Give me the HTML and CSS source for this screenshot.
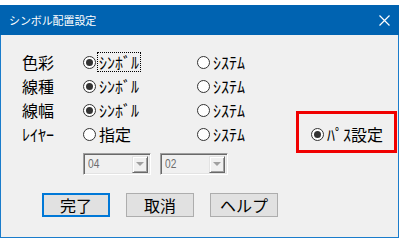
FILE: index.html
```html
<!DOCTYPE html>
<html lang="ja">
<head>
<meta charset="utf-8">
<link rel="stylesheet" href="styles.css">
</head>
<body>
<div class="window">
  <div class="titlebar">
    <span class="title">シンボル配置設定</span>
    <svg class="close" width="11" height="11" viewBox="0 0 11 11"><path d="M0.5 0.5 L10.5 10.5 M10.5 0.5 L0.5 10.5" stroke="#fff" stroke-width="1.2" fill="none"/></svg>
  </div>
  <div class="content">
    <div class="grid">
      <div class="label">色彩</div>
      <div class="radio"><span class="dot checked"></span><span class="text focus">ｼﾝﾎﾞﾙ</span></div>
      <div class="radio"><span class="dot"></span><span class="text">ｼｽﾃﾑ</span></div>
      <div></div>

      <div class="label">線種</div>
      <div class="radio"><span class="dot checked"></span><span class="text">ｼﾝﾎﾞﾙ</span></div>
      <div class="radio"><span class="dot"></span><span class="text">ｼｽﾃﾑ</span></div>
      <div></div>

      <div class="label">線幅</div>
      <div class="radio"><span class="dot checked"></span><span class="text">ｼﾝﾎﾞﾙ</span></div>
      <div class="radio"><span class="dot"></span><span class="text">ｼｽﾃﾑ</span></div>
      <div></div>

      <div class="label">ﾚｲﾔｰ</div>
      <div class="radio"><span class="dot"></span><span class="text">指定</span></div>
      <div class="radio"><span class="dot"></span><span class="text">ｼｽﾃﾑ</span></div>
      <div class="radio marked"><span class="dot checked"></span><span class="text">ﾊﾟｽ設定</span></div>
    </div>
    <div class="combos">
      <div class="combo"><span class="value">04</span><span class="drop"><span class="tri"></span></span></div>
      <div class="combo"><span class="value">02</span><span class="drop"><span class="tri"></span></span></div>
    </div>
    <div class="buttons">
      <div class="btn default">完了</div>
      <div class="btn">取消</div>
      <div class="btn">ヘルプ</div>
    </div>
  </div>
</div>
</body>
</html>
```
FILE: styles.css
```css
html, body {
  margin: 0;
  padding: 0;
  background: #ffffff;
}
body {
  font-family: "Noto Sans CJK JP", "Noto Sans", sans-serif;
  color: #000;
}
.window {
  margin-top: 5px;
  width: 399px;
  height: 233px;
  box-sizing: border-box;
  border: 1px solid #1A7CCB;
  border-top: 0;
  background: #F0F0F0;
}
.titlebar {
  height: 30px;
  background: #0063B1;
  display: flex;
  align-items: center;
  justify-content: space-between;
  padding: 0 9px 0 9px;
  margin: 0 -1px;
}
.title {
  color: #fff;
  font-size: 11px;
  letter-spacing: -0.1px;
}
.close {
  display: block;
  margin-top: 1px;
}
.content {
  padding: 15px 0 0 21px;
}
.grid {
  display: grid;
  grid-template-columns: 61px 114px 114px auto;
  grid-auto-rows: 24px;
  align-items: center;
}
.label {
  font-size: 16px;
  line-height: 24px;
}
.radio {
  display: flex;
  align-items: center;
  gap: 3px;
  font-size: 16px;
  line-height: 18px;
}
.dot {
  width: 13px;
  height: 13px;
  box-sizing: border-box;
  border: 1px solid #333;
  border-radius: 50%;
  background: #fff;
  display: flex;
  align-items: center;
  justify-content: center;
  flex: none;
}
.dot.checked::after {
  content: "";
  width: 7px;
  height: 7px;
  border-radius: 50%;
  background: #333;
}
.text.focus {
  outline: 1px dotted #000;
  outline-offset: 0;
  padding: 0 1px;
  margin-left: -1px;
}
.marked {
  position: relative;
}
.marked::before {
  content: "";
  position: absolute;
  left: -15px;
  top: -14px;
  width: 101px;
  height: 42px;
  box-sizing: border-box;
  border: 3px solid #F00000;
}
.combos {
  display: flex;
  gap: 9px;
  margin-top: 7px;
  padding-left: 61px;
}
.combo {
  width: 68px;
  height: 22px;
  box-sizing: border-box;
  border-top: 1px solid #A0A0A0;
  border-left: 1px solid #A0A0A0;
  border-right: 1px solid #FFFFFF;
  border-bottom: 1px solid #FFFFFF;
  box-shadow: inset 1px 1px 0 #696969, inset -1px -1px 0 #E3E3E3;
  display: flex;
  align-items: center;
  justify-content: space-between;
  padding: 2px 2px 2px 4px;
}
.value {
  font-family: "Liberation Sans", sans-serif;
  font-size: 12px;
  color: #6D6D6D;
  transform: scaleX(0.85);
  transform-origin: left center;
}
.drop {
  width: 16px;
  height: 17px;
  box-sizing: border-box;
  background: #F0F0F0;
  border-top: 1px solid #E3E3E3;
  border-left: 1px solid #E3E3E3;
  border-right: 1px solid #696969;
  border-bottom: 1px solid #696969;
  box-shadow: inset 1px 1px 0 #fff, inset -1px -1px 0 #A0A0A0;
  display: flex;
  align-items: center;
  justify-content: center;
}
.tri {
  width: 0;
  height: 0;
  border-left: 4px solid transparent;
  border-right: 4px solid transparent;
  border-top: 4px solid #A0A0A0;
}
.buttons {
  display: flex;
  gap: 16px;
  margin-top: 18px;
  padding-left: 20px;
}
.btn {
  width: 68px;
  height: 24px;
  box-sizing: border-box;
  border: 1px solid #ADADAD;
  background: #E1E1E1;
  font-size: 16px;
  display: flex;
  align-items: center;
  justify-content: center;
  line-height: 1;
}
.btn.default {
  border: 2px solid #0078D7;
}
```
